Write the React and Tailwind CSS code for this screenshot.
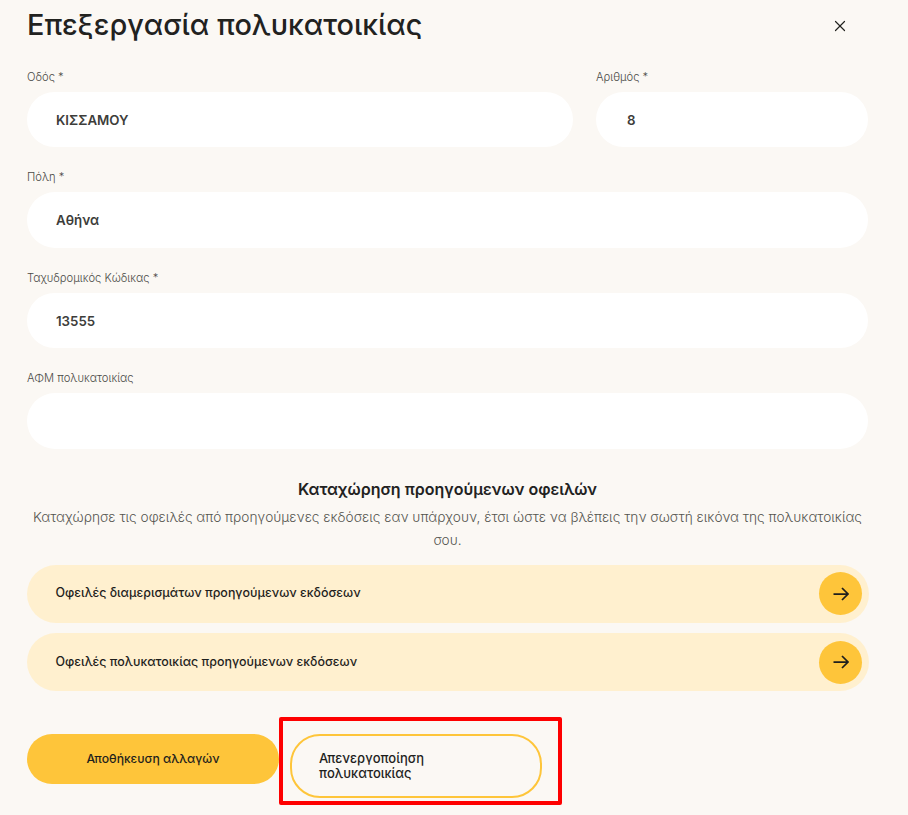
import { X } from "lucide-react";

const font = { fontFamily: 'Inter, "Noto Sans", sans-serif' };

function Field({ label, value, className = "", inputClass = "pl-[29px]" }) {
  return (
    <div className={className}>
      <label className="block h-[17px] pt-[1px] text-[11.2px] leading-[16px] font-light text-[#4a4a46]">{label}</label>
      <input
        readOnly
        value={value}
        className={`mt-[7px] block h-[55.5px] w-full rounded-[28px] bg-white pt-[1px] pr-4 text-[13.3px] font-semibold text-[#3d3d3a] outline-none ${inputClass}`}
      />
    </div>
  );
}

function DebtRow({ text }) {
  return (
    <div className="flex h-[58px] items-center justify-between rounded-[29px] bg-[#fff0cf] pl-[28.5px] pr-[7px]">
      <span className="text-[12.45px] font-medium text-[#1f1f1d]">{text}</span>
      <button className="flex h-[43px] w-[43px] items-center justify-center rounded-full bg-[#fec53a] text-[#1f1f1d]" aria-label="open">
        <svg width="16" height="14" viewBox="0 0 16 14" fill="none" stroke="currentColor" strokeWidth="1.75">
          <path d="M0.5 7H15M9 1l6 6-6 6" />
        </svg>
      </button>
    </div>
  );
}

export default function App() {
  return (
    <div className="relative h-[815px] w-[908px] overflow-hidden bg-[#fbf8f4] pl-[27px] pr-[40px]" style={font}>
      {/* header */}
      <div className="flex h-[67.5px] items-start justify-between">
        <h1 className="mt-[4px] text-[28.85px] leading-[42px] font-medium text-[#22221f]">
          Επεξεργασία πολυκατοικίας
        </h1>
        <button className="mt-[16.5px] mr-[19px] text-[#22221f]" aria-label="close">
          <X className="h-[18px] w-[18px]" strokeWidth={1.6} />
        </button>
      </div>

      {/* form */}
      <div className="flex flex-col gap-[21px]">
        <div className="flex gap-[23px]">
          <Field label="Οδός *" value="ΚΙΣΣΑΜΟΥ" className="flex-1" />
          <Field label="Αριθμός *" value="8" className="w-[272px]" inputClass="pl-[31px]" />
        </div>
        <Field label="Πόλη *" value="Αθήνα" />
        <Field label="Ταχυδρομικός Κώδικας *" value="13555" />
        <Field label="ΑΦΜ πολυκατοικίας" value="" />
      </div>

      {/* previous debts */}
      <div className="mt-[28px] text-center">
        <h2 className="text-[16px] leading-[24px] font-semibold text-[#22221f]">Καταχώρηση προηγούμενων οφειλών</h2>
        <p className="mt-[5.5px] text-[13.7px] leading-[23px] font-light text-[#55554f]">
          Καταχώρησε τις οφειλές από προηγούμενες εκδόσεις εαν υπάρχουν, έτσι ώστε να βλέπεις την σωστή εικόνα της πολυκατοικίας σου.
        </p>
      </div>
      <div className="mt-[12.5px] mr-[-1px] flex flex-col gap-[10.5px]">
        <DebtRow text="Οφειλές διαμερισμάτων προηγούμενων εκδόσεων" />
        <DebtRow text="Οφειλές πολυκατοικίας προηγούμενων εκδόσεων" />
      </div>

      {/* actions */}
      <div className="mt-[43px] flex items-start gap-[11px]">
        <button className="h-[50px] w-[252px] rounded-[25px] bg-[#fec53a] text-[12.2px] font-medium text-[#1f1f1d]">
          Αποθήκευση αλλαγών
        </button>
        <button className="h-[64px] w-[252px] rounded-[30px] border-2 border-[#fec53a] pl-[27px] pr-[70px] text-left text-[13px] leading-[15px] font-medium text-[#1f1f1d]">
          Απενεργοποίηση πολυκατοικίας
        </button>
      </div>

      {/* red annotation */}
      <div className="absolute top-[717px] left-[279px] h-[88px] w-[283px] rounded-[2px] border-4 border-[#fe0000]" />
    </div>
  );
}
